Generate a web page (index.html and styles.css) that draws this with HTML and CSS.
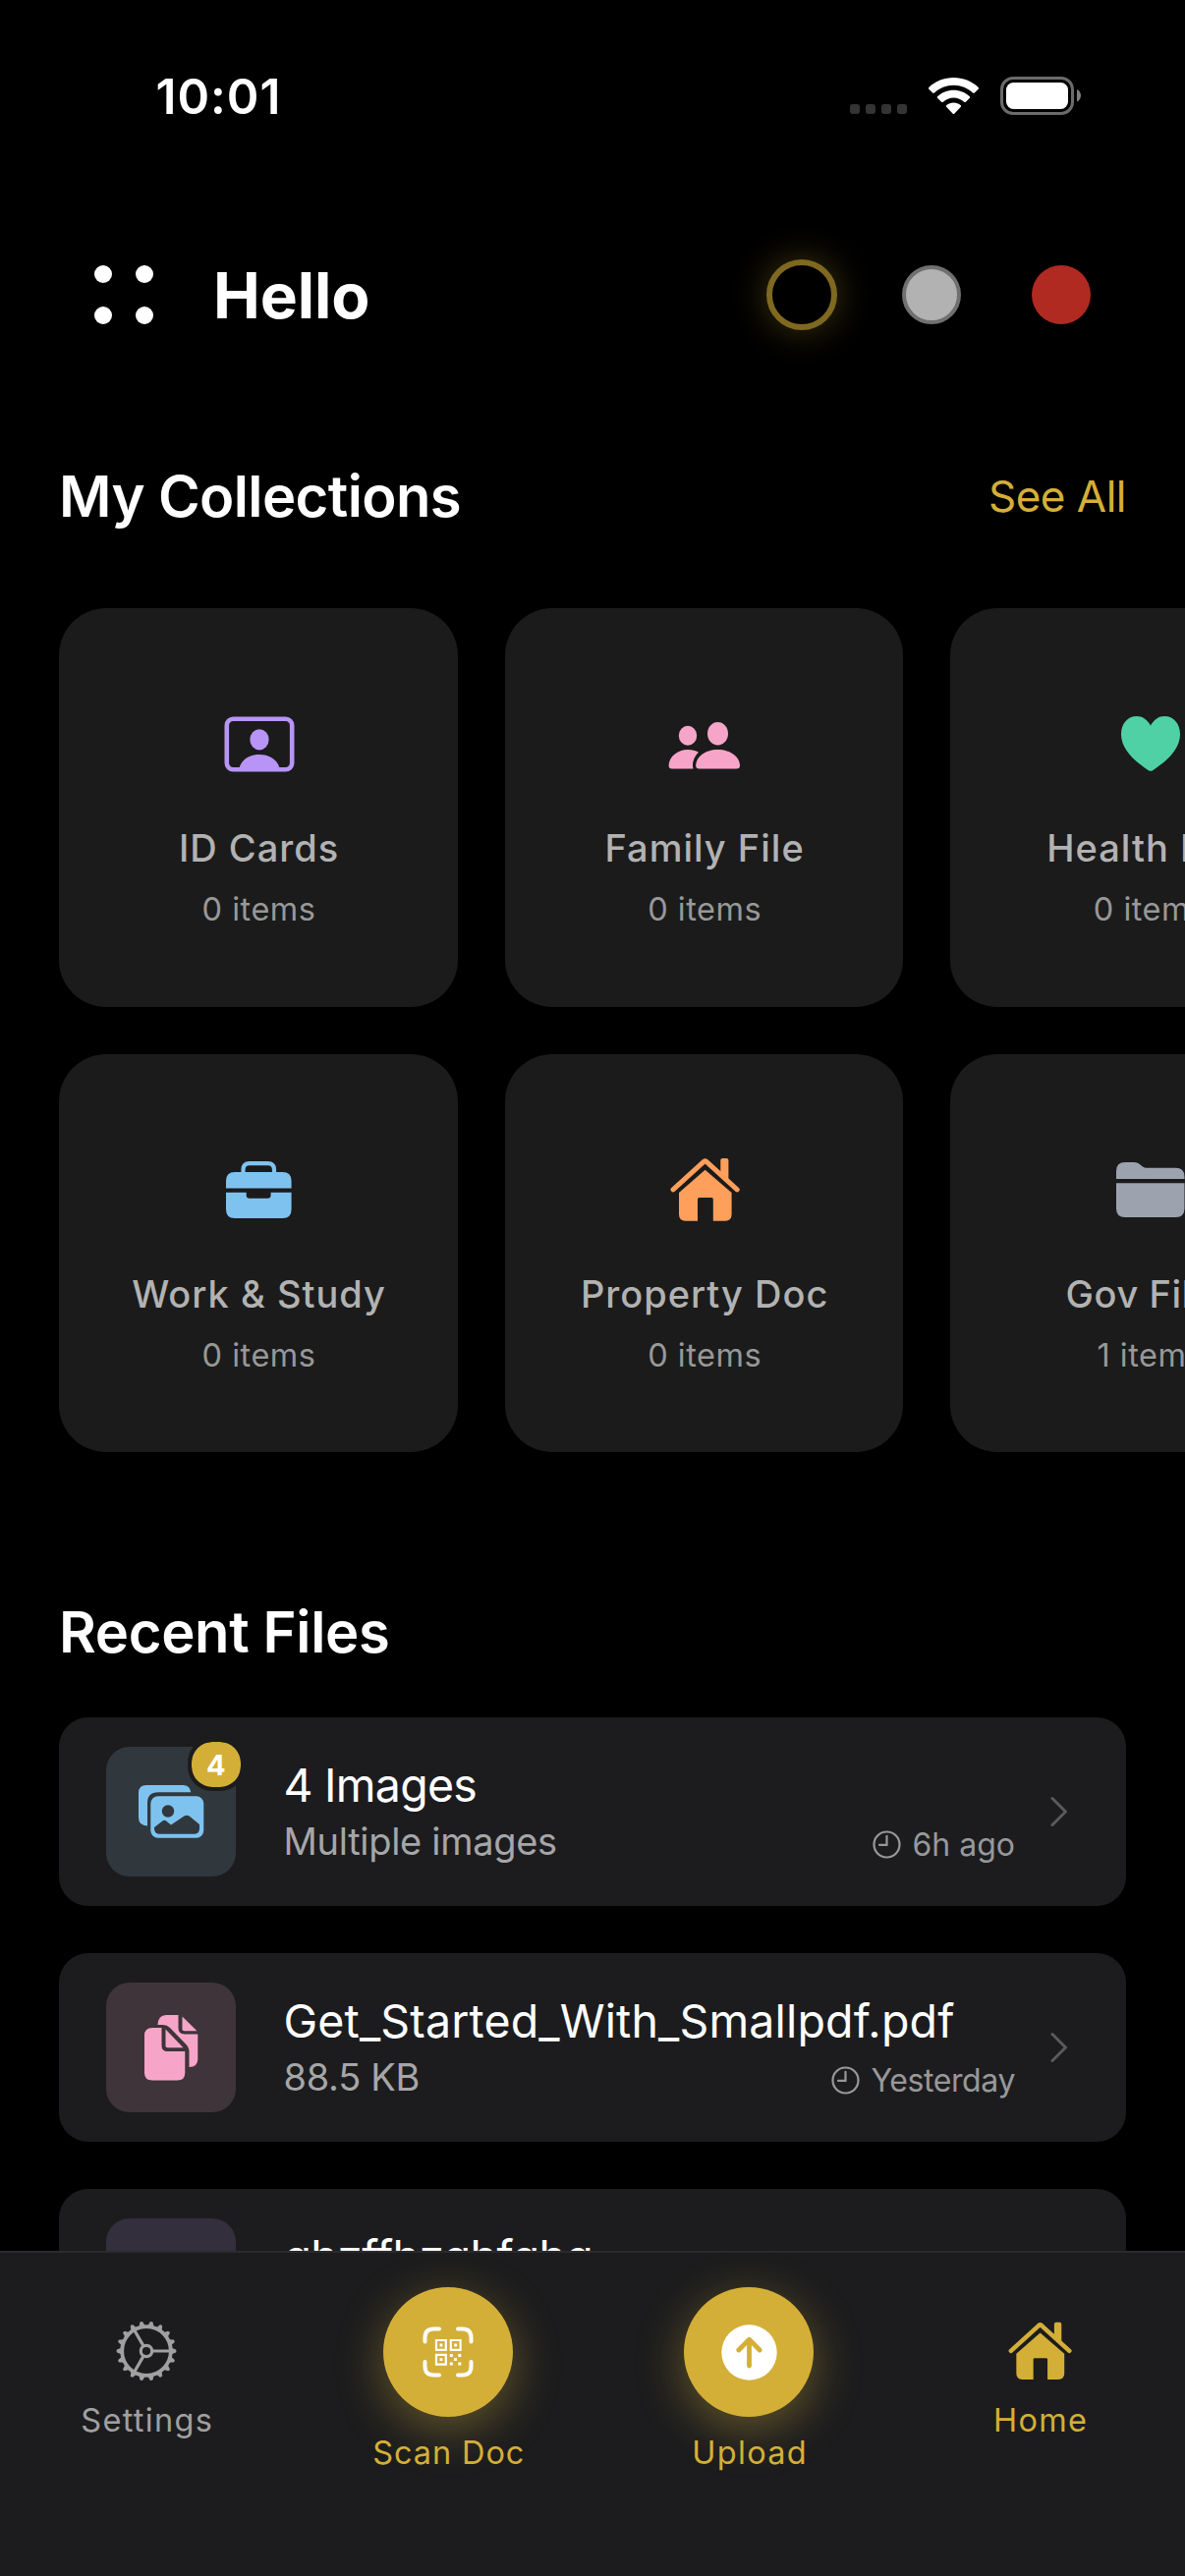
FILE: index.html
```html
<!DOCTYPE html>
<html lang="en">
<head>
<meta charset="utf-8">
<title>Documents</title>
<link rel="stylesheet" href="styles.css">
</head>
<body>
<div class="app">
  <main class="main">
    <div class="status">
      <span class="status-time">10:01</span>
      <div class="status-icons">
        <div class="signal"><i></i><i></i><i></i><i></i></div>
        <svg class="wifi" width="51" height="38" viewBox="0 0 51 38" fill="#fff">
          <path d="M25.5 0C35 0 44.200 3.600 50.500 9.800C51.200 10.500 51.200 11.200 50.600 11.800L46.800 15.400C46.200 16 45.600 16 45 15.400C40 10.600 32.900 7.700 25.500 7.700S11 10.600 6 15.400C5.400 16 4.800 16 4.200 15.400L.4 11.800C-.2 11.200-.2 10.500 .5 9.800C6.800 3.600 16 0 25.500 0Z"/>
          <path d="M25.500 12.800C31.800 12.800 37.500 15.100 41.700 19.100C42.300 19.700 42.300 20.400 41.700 21L37.900 24.700C37.300 25.300 36.700 25.200 36.100 24.700C33.300 22.200 29.600 20.500 25.500 20.500S17.700 22.200 14.900 24.700C14.300 25.200 13.700 25.300 13.100 24.700L9.300 21C8.700 20.400 8.700 19.700 9.300 19.100C13.500 15.100 19.200 12.800 25.500 12.800Z"/>
          <path d="M25.500 25.400C28.300 25.400 30.700 26.400 32.600 28C33.300 28.600 33.300 29.300 32.600 30L26.500 36.500C25.800 37.200 25.200 37.200 24.500 36.500L18.400 30C17.700 29.300 17.700 28.600 18.400 28C20.300 26.400 22.700 25.400 25.500 25.400Z"/>
        </svg>
        <svg class="battery" width="82" height="39" viewBox="0 0 82 39">
          <rect x="1.500" y="1.500" width="72" height="36" rx="11.500" fill="none" stroke="#6b6b6b" stroke-width="3"/>
          <rect x="6" y="6" width="63" height="27" rx="7.500" fill="#fff"/>
          <path d="M78 13C80.500 14.200 82 16.500 82 19.300S80.500 24.500 78 25.500Z" fill="#808080"/>
        </svg>
      </div>
    </div>

    <header class="header">
      <div class="menu"><i></i><i></i><i></i><i></i></div>
      <h1 class="hello">Hello</h1>
      <div class="themes">
        <span class="theme theme-black"></span>
        <span class="theme theme-gray"></span>
        <span class="theme theme-red"></span>
      </div>
    </header>

    <div class="section-head">
      <h2 class="heading">My Collections</h2>
      <a class="see-all">See All</a>
    </div>

    <div class="collections">
      <div class="card">
        <div class="card-icon">
          <svg width="72" height="57" viewBox="0 0 72 57" fill="#b794f6">
            <rect x="2.800" y="2.800" width="66.400" height="51.400" rx="6.500" fill="none" stroke="#b794f6" stroke-width="4.600"/>
            <ellipse cx="36" cy="23.800" rx="9.600" ry="10.600"/>
            <path d="M15.300 53C18 43.500 26.500 39 36 39S54 43.500 56.700 53Z"/>
          </svg>
        </div>
        <div class="card-title">ID Cards</div>
        <div class="card-count">0 items</div>
      </div>
      <div class="card">
        <div class="card-icon">
          <svg width="74" height="53" viewBox="0 -3 74 53" fill="#f6a5c9">
            <ellipse cx="20" cy="14.700" rx="9.200" ry="10"/>
            <ellipse cx="50.500" cy="12.700" rx="10.500" ry="11.700"/>
            <path d="M4 48.500C1.700 48.500.6 47.500.6 45.500C.6 36 10 29 20 29C24 29 28 30 31 31.800C27.500 35 25 40 25 45C25 46.300 25.100 47.400 25.500 48.500Z"/>
            <path d="M31.800 48.500C29.200 48.500 28.200 47.200 28.200 45.200C28.200 37 37 29 50.500 29S73 37 73 45.200C73 47.200 71.900 48.500 69.400 48.500Z"/>
          </svg>
        </div>
        <div class="card-title">Family File</div>
        <div class="card-count">0 items</div>
      </div>
      <div class="card">
        <div class="card-icon">
          <svg width="60" height="56" viewBox="0 0 60 56" fill="#4fd1a5">
            <path d="M30 9.500C26.500 3.300 21.500 0 16 0C6.500 0 0 7.500 0 18.500C0 33 12.500 45 28 55.200Q30 56.500 32 55.200C47.500 45 60 33 60 18.500C60 7.500 53.500 0 44 0C38.500 0 33.500 3.300 30 9.500Z"/>
          </svg>
        </div>
        <div class="card-title">Health Doc</div>
        <div class="card-count">0 items</div>
      </div>
      <div class="card">
        <div class="card-icon">
          <svg width="67" height="58" viewBox="0 0 67 58" fill="#7ec3f0">
            <path d="M17.500 12V8.500Q17.500 2.100 24 2.100H42.500Q49 2.100 49 8.500V12" fill="none" stroke="#7ec3f0" stroke-width="4.200"/>
            <path d="M0 27.500V20Q0 11 9 11H57.600Q66.600 11 66.600 20V27.500Z"/>
            <path d="M0 31.700H20.700V34.500Q20.700 37.700 24 37.700H42.300Q45.600 37.700 45.600 34.500V31.700H66.600V49Q66.600 58 57.600 58H9Q0 58 0 49Z"/>
          </svg>
        </div>
        <div class="card-title">Work &amp; Study</div>
        <div class="card-count">0 items</div>
      </div>
      <div class="card">
        <div class="card-icon">
          <svg width="71" height="64" viewBox="0 0 71 64" fill="#ff9f5c">
            <path d="M3 31.800L34.300 3.300Q35.600 2.200 36.900 3.300L68.200 31.800" fill="none" stroke="#ff9f5c" stroke-width="5" stroke-linecap="round" stroke-linejoin="round"/>
            <path d="M51.300 18V2Q51.300 0 53.300 0H57.400Q59.400 0 59.400 2V25Z"/>
            <path d="M35.600 11.700L62.600 35V57Q62.600 63.700 56 63.700H43.800V41.500Q43.800 40 42.300 40H29.500Q28 40 28 41.500V63.700H15.500Q9 63.700 9 57V35Z"/>
          </svg>
        </div>
        <div class="card-title">Property Doc</div>
        <div class="card-count">0 items</div>
      </div>
      <div class="card">
        <div class="card-icon">
          <svg width="70" height="56" viewBox="0 0 70 56" fill="#9ca3af">
            <path d="M0 17V9Q0 0 9 0H18C21 0 23 1 25 3L27 4.600Q28.500 5.800 31 5.800H60.500Q69.500 5.800 69.500 14.800V17Z"/>
            <path d="M0 21.300H69.500V47Q69.500 56 60.500 56H9Q0 56 0 47Z"/>
          </svg>
        </div>
        <div class="card-title title-snug">Gov Files</div>
        <div class="card-count">1 items</div>
      </div>
    </div>

    <h2 class="heading recent-heading">Recent Files</h2>

    <div class="files">
      <div class="file">
        <div class="tile tile-blue">
          <svg width="67" height="54" viewBox="0 0 67 54" fill="#7ec3f0">
            <path d="M8 0H45.500Q52 0 53.300 7.300H20Q9 7.300 9 18V41.500Q0 41 0 33V8Q0 0 8 0Z"/>
            <rect x="12.300" y="11.300" width="54" height="42.500" rx="7.500"/>
            <circle class="hole" cx="30" cy="26.500" r="6.200"/>
            <path class="hole" d="M16 43L24.700 36.300Q26.300 35.100 27.900 36.300L33 40.500L46 31.700Q49 29.800 52 31.700L62 40V44Q62 49.700 57 49.700H21Q16 49.700 16 44Z"/>
          </svg>
          <span class="badge">4</span>
        </div>
        <div class="file-body">
          <div class="file-name name-tight">4 Images</div>
          <div class="file-meta">
            <span class="file-size">Multiple images</span>
            <span class="file-time">
              <svg width="29" height="29" viewBox="0 0 29 29" fill="none" stroke="#98989a" stroke-width="2.200" stroke-linecap="round"><circle cx="14.500" cy="14.500" r="13"/><path d="M14.500 5.800V14.800H7"/></svg>
              <span>6h ago</span>
            </span>
          </div>
        </div>
        <svg class="chevron" width="18" height="32" viewBox="0 0 18 32"><path d="M2 2.500L15.500 16L2 29.500"/></svg>
      </div>

      <div class="file">
        <div class="tile tile-pink">
          <svg width="55" height="67" viewBox="0 0 55 67" fill="#f6a5c9">
            <path d="M13.500 10Q14 0 22 0H34.500V13Q34.500 19.500 41 19.500H54.300V45Q54.300 52.800 45.500 53V37Q45.500 33 42 29.500L26 13Q23 10 19 10Z"/>
            <path d="M38.500 1.500L53.500 16.200H40.500Q38.500 16.200 38.500 14.200Z"/>
            <path d="M8 13H17.500V31Q17.500 37 23.500 37H41.300V59Q41.300 66.500 33.500 66.500H8Q0 66.500 0 59V21Q0 13 8 13Z"/>
            <path d="M21.500 14.500L39.500 33.200H23.500Q21.500 33.200 21.500 31.200Z"/>
          </svg>
        </div>
        <div class="file-body">
          <div class="file-name">Get_Started_With_Smallpdf.pdf</div>
          <div class="file-meta">
            <span class="file-size">88.5 KB</span>
            <span class="file-time time-tight">
              <svg width="29" height="29" viewBox="0 0 29 29" fill="none" stroke="#98989a" stroke-width="2.200" stroke-linecap="round"><circle cx="14.500" cy="14.500" r="13"/><path d="M14.500 5.800V14.800H7"/></svg>
              <span>Yesterday</span>
            </span>
          </div>
        </div>
        <svg class="chevron" width="18" height="32" viewBox="0 0 18 32"><path d="M2 2.500L15.500 16L2 29.500"/></svg>
      </div>

      <div class="file">
        <div class="tile tile-purple"></div>
        <div class="file-body">
          <div class="file-name name-snug">ghzffhzghfghg</div>
          <div class="file-meta"></div>
        </div>
      </div>
    </div>
  </main>

  <nav class="tabs">
    <div class="tab tab-settings">
      <svg class="tab-icon" width="62" height="62" viewBox="-31 -31 62 62" fill="none" stroke="#a0a0a0">
        <defs><path id="tooth" d="M25 -3.400L30 -1.400Q31 0 30 1.400L25 3.400Z" fill="#a0a0a0" stroke="none"/></defs>
        <circle r="24.800" stroke-width="3.800"/>
        <circle r="5.700" stroke-width="3.200"/>
        <path d="M6.500 0H24M-3.250 -5.600L-12 -20.800M-3.250 5.600L-12 20.800" stroke-width="3.200"/>
        <g id="third">
          <use href="#tooth"/><use href="#tooth" transform="rotate(20)"/><use href="#tooth" transform="rotate(40)"/><use href="#tooth" transform="rotate(60)"/><use href="#tooth" transform="rotate(80)"/><use href="#tooth" transform="rotate(100)"/>
        </g>
        <use href="#third" transform="rotate(120)"/>
        <use href="#third" transform="rotate(240)"/>
      </svg>
      <span class="tab-label">Settings</span>
    </div>
    <div class="tab tab-scan">
      <span class="round">
        <svg width="52" height="52" viewBox="0 0 52 52" fill="#fff">
          <path d="M2.500 15.500V11.500Q2.500 2.500 11.500 2.500H17M36 2.500H40.500Q49.500 2.500 49.500 11.500V15.500M49.500 36V40.500Q49.500 49.500 40.500 49.500H36M17 49.500H11.500Q2.500 49.500 2.500 40.500V36" fill="none" stroke="#fff" stroke-width="4" stroke-linecap="round"/>
          <path d="M14 14h9.800v9.800H14zM28.800 14h9.800v9.800H28.800zM14 28.800h9.800v9.800H14z" fill="none" stroke="#fff" stroke-width="2.200"/>
          <path d="M17.500 17.500h2.900v2.900h-2.900zM32.200 17.500h2.900v2.900h-2.900zM17.500 32.200h2.900v2.900h-2.900zM27.800 27.900h3v3h-3zM36.300 27.900h3v3h-3zM32 32.100h3v3h-3zM27.800 36.400h3v3h-3zM36.300 36.400h3v3h-3z"/>
        </svg>
      </span>
      <span class="tab-label label-snug">Scan Doc</span>
    </div>
    <div class="tab tab-upload">
      <span class="round">
        <svg width="57" height="57" viewBox="0 0 57 57">
          <circle cx="28.500" cy="28.500" r="28.200" fill="#fff"/>
          <path d="M28.500 42V15.500M17.800 26L28.500 15.200L39.200 26" fill="none" stroke="#d4af37" stroke-width="4.800" stroke-linecap="round" stroke-linejoin="round"/>
        </svg>
      </span>
      <span class="tab-label">Upload</span>
    </div>
    <div class="tab tab-home">
      <svg class="tab-icon" width="65" height="62" viewBox="0 -2 71 68" fill="#d4af37">
        <path d="M3 31.800L34.300 3.300Q35.600 2.200 36.900 3.300L68.200 31.800" fill="none" stroke="#d4af37" stroke-width="5" stroke-linecap="round" stroke-linejoin="round"/>
        <path d="M51.300 18V2Q51.300 0 53.300 0H57.400Q59.400 0 59.400 2V25Z"/>
        <path d="M35.600 11.700L62.600 35V57Q62.600 63.700 56 63.700H43.800V41.500Q43.800 40 42.300 40H29.500Q28 40 28 41.500V63.700H15.500Q9 63.700 9 57V35Z"/>
      </svg>
      <span class="tab-label">Home</span>
    </div>
  </nav>
</div>
</body>
</html>
```
FILE: styles.css
```css
* { box-sizing: border-box; }
body { margin: 0; background: #000; color: #fff; font-family: Inter, "Liberation Sans", sans-serif; }
h1, h2 { margin: 0; }
svg { display: block; flex: none; }

.app { width: 1206px; height: 2622px; display: flex; flex-direction: column; overflow: hidden; }
.main { height: 2291px; flex: none; overflow: hidden; }

/* Status bar */
.status { height: 195px; padding: 0 106px 0 158.500px; display: flex; align-items: center; justify-content: space-between; }
.status-time { font-size: 49.5px; font-weight: 600; line-height: 60px; letter-spacing: 1px; }
.status-icons { display: flex; align-items: center; }
.signal { display: flex; gap: 6px; margin: 26px 22px 0 0; }
.signal i { width: 10px; height: 10px; border-radius: 3px; background: #343434; }
.wifi { margin-right: 22px; }

/* Header */
.header { height: 210px; padding: 0 96px; display: flex; align-items: center; }
.menu { width: 60px; display: grid; grid-template-columns: 18px 18px; gap: 24px; }
.menu i { width: 18px; height: 18px; border-radius: 50%; background: #fff; }
.hello { flex: 1; margin: 2px 0 0 61px; font-size: 64px; font-weight: 700; line-height: 78px; letter-spacing: -.1px; }
.themes { display: flex; align-items: center; }
.theme { width: 60px; height: 60px; border-radius: 50%; }
.theme-black { width: 72px; height: 72px; margin-right: 66px; border: 6px solid #7f6820; background: #000; box-shadow: 0 0 36px rgba(212, 175, 55, .3); }
.theme-gray { margin-right: 72px; border: 4.500px solid #707070; background: #b2b2b2; }
.theme-red { background: #b02a22; }

/* Collections */
.section-head { height: 200px; padding: 0 60px; display: flex; align-items: center; justify-content: space-between; }
.heading { font-size: 58px; font-weight: 600; line-height: 70px; letter-spacing: -.6px; }
.see-all { margin-top: -1px; color: #d4af37; font-size: 44px; line-height: 54px; letter-spacing: -.5px; }
.collections { margin-top: 14.200px; padding-left: 60px; display: grid; grid-template-columns: repeat(3, 405.600px); grid-auto-rows: 405.600px; gap: 48px; }
.card { padding: 102px 0 0 1.500px; border-radius: 48px; background: #1b1b1b; display: flex; flex-direction: column; align-items: center; white-space: nowrap; }
.card-icon { height: 72px; display: flex; align-items: center; }
.card-title { margin-top: 46px; color: #b2b2b2; font-size: 38px; font-weight: 500; line-height: 48px; letter-spacing: 1px; }
.title-snug { letter-spacing: .6px; }
.card-count { margin-top: 19px; color: #989898; font-size: 32.5px; line-height: 40px; letter-spacing: .5px; }

/* Recent files */
.recent-heading { margin: 147.500px 60px 52.500px; letter-spacing: -.35px; }
.files { padding: 0 60px; display: flex; flex-direction: column; gap: 48px; }
.file { height: 192px; padding: 0 59px 0 48px; border-radius: 30px; background: #1c1c1e; display: flex; align-items: center; }
.tile { position: relative; flex: none; width: 132px; height: 132px; border-radius: 24px; display: flex; align-items: center; justify-content: center; }
.tile-blue { background: #30383e; }
.tile-pink { background: #3e343a; }
.tile-purple { background: #332f3c; }
.hole { fill: #30383e; }
.badge { position: absolute; top: -9px; right: -9px; width: 58.500px; height: 53.500px; border: 4px solid #1c1c1e; border-radius: 25px; background: #d4af37; background-clip: padding-box; font-size: 29px; font-weight: 700; line-height: 47px; text-align: center; }
.file-body { flex: 1; margin-left: 48.500px; padding-bottom: 3px; }
.file-name { font-size: 46.5px; line-height: 56px; letter-spacing: .15px; white-space: nowrap; }
.name-tight { letter-spacing: -.75px; }
.name-snug { letter-spacing: -.65px; }
.file-meta { height: 46px; margin-top: 6.300px; display: flex; align-items: center; justify-content: space-between; }
.file-size { color: #a6a6a8; font-size: 38px; line-height: 46px; letter-spacing: -.3px; }
.file-time { padding-top: 7px; display: flex; align-items: center; gap: 11.500px; color: #98989a; font-size: 32px; line-height: 40px; }
.time-tight { letter-spacing: -.4px; }
.chevron { margin: -1px 0 0 36px; fill: none; stroke: #5a5a5c; stroke-width: 3; stroke-linecap: round; stroke-linejoin: round; }

/* Bottom tabs */
.tabs { height: 331px; flex: none; padding-top: 35px; border-top: 2px solid #2b2b2d; background: #1c1c1e; display: grid; grid-template-columns: 298px 316px 296.800px 295.200px; }
.tab { display: flex; flex-direction: column; align-items: center; color: #d4af37; }
.tab-settings { color: #a0a0a0; }
.tab-icon { margin: 33.500px 0 3.500px; }
.tab-label { margin: 17px 0 0 1.500px; font-size: 32.5px; font-weight: 400; line-height: 40px; letter-spacing: 1.3px; z-index: 1; }
.label-snug { letter-spacing: .9px; }
.round { width: 132px; height: 132px; border-radius: 50%; background: #d4af37; box-shadow: 0 12px 48px rgba(212, 175, 55, .4); display: flex; align-items: center; justify-content: center; }
```
